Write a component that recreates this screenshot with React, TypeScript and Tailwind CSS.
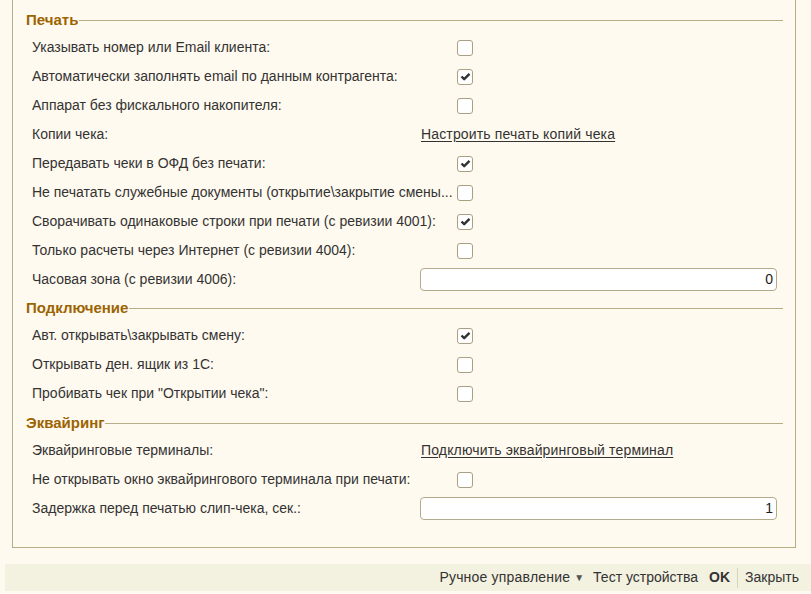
import React from 'react'

type Row =
    | { kind: 'check'; label: string; checked: boolean }
    | { kind: 'link'; label: string; link: string }
    | { kind: 'input'; label: string; value: string }

const sections: { title: string; rows: Row[] }[] = [
    {
        title: 'Печать',
        rows: [
            { kind: 'check', label: 'Указывать номер или Email клиента:', checked: false },
            { kind: 'check', label: 'Автоматически заполнять email по данным контрагента:', checked: true },
            { kind: 'check', label: 'Аппарат без фискального накопителя:', checked: false },
            { kind: 'link', label: 'Копии чека:', link: 'Настроить печать копий чека' },
            { kind: 'check', label: 'Передавать чеки в ОФД без печати:', checked: true },
            { kind: 'check', label: 'Не печатать служебные документы (открытие\\закрытие смены...', checked: false },
            { kind: 'check', label: 'Сворачивать одинаковые строки при печати (с ревизии 4001):', checked: true },
            { kind: 'check', label: 'Только расчеты через Интернет (с ревизии 4004):', checked: false },
            { kind: 'input', label: 'Часовая зона (с ревизии 4006):', value: '0' },
        ],
    },
    {
        title: 'Подключение',
        rows: [
            { kind: 'check', label: 'Авт. открывать\\закрывать смену:', checked: true },
            { kind: 'check', label: 'Открывать ден. ящик из 1С:', checked: false },
            { kind: 'check', label: 'Пробивать чек при "Открытии чека":', checked: false },
        ],
    },
    {
        title: 'Эквайринг',
        rows: [
            { kind: 'link', label: 'Эквайринговые терминалы:', link: 'Подключить эквайринговый терминал' },
            { kind: 'check', label: 'Не открывать окно эквайрингового терминала при печати:', checked: false },
            { kind: 'input', label: 'Задержка перед печатью слип-чека, сек.:', value: '1' },
        ],
    },
]

const Checkbox = ({ checked }: { checked: boolean }) => (
    <div className="w-[16px] h-[16px] rounded-[3px] border border-[#a9a083] bg-white flex items-center justify-center">
        {checked ?
            <svg width="11" height="9" viewBox="0 0 11 9">
                <path d="M1.5 4.5 L4.2 7.2 L9.5 1.8" stroke="#333" strokeWidth="2.4" fill="none" strokeLinejoin="round" />
            </svg>
            : null}
    </div>
)

const FieldRow = ({ row }: { row: Row }) => {
    if (row.kind === 'check') {
        return (
            <div className="h-[29px] flex items-center pl-[6px]">
                <div className="w-[420px] whitespace-nowrap overflow-hidden">{row.label}</div>
                <div className="ml-[5px]"><Checkbox checked={row.checked} /></div>
            </div>
        )
    }
    if (row.kind === 'link') {
        return (
            <div className="h-[29px] flex items-center pl-[6px]">
                <div className="w-[389px] truncate">{row.label}</div>
                <span className="underline underline-offset-2 tracking-[0.15px]">{row.link}</span>
            </div>
        )
    }
    return (
        <div className="h-[29px] flex items-center pl-[6px]">
            <div className="w-[388px] truncate">{row.label}</div>
            <div className="w-[357px] h-[23px] rounded-[4px] border border-[#b3aa8c] bg-white flex items-center justify-end pr-[3px] text-[#1a1a1a]">
                {row.value}
            </div>
        </div>
    )
}

export default function App() {
    return (
        <div className="w-[811px] h-[594px] bg-[#fffaef] text-[#333] text-[14px] overflow-hidden" style={{ fontFamily: 'Arial, "Liberation Sans", sans-serif' }}>
            <div className="ml-[12px] w-[784px] border-x border-b border-[#b7ad86] pl-[13px] pr-[12px] pt-[7px] pb-[24px]">
                {sections.map((s, i) => (
                    <div key={s.title}>
                        <div className={`h-[26px] flex items-center gap-[1px] ${i === 0 ? '' : i === 1 ? 'mt-[1px]' : 'mt-[2px]'}`}>
                            <span className="font-bold text-[15px] text-[#9c6402]">{s.title}</span>
                            <div className="flex-1 h-px bg-[#b7ad86] mt-[1px]" />
                        </div>
                        {s.rows.map((r) => <FieldRow key={r.label} row={r} />)}
                    </div>
                ))}
            </div>
            <div className="ml-[5px] mt-[16px] h-[27px] bg-[#f3f1e0] flex items-center justify-end pr-[12px] text-[#333] text-[14px]">
                <span className="tracking-[0.2px]">Ручное управление</span>
                <span className="ml-[4px] text-[10px] text-[#555]">▼</span>
                <span className="ml-[9px]">Тест устройства</span>
                <span className="ml-[11px] font-bold">OK</span>
                <div className="mx-[7px] w-px h-[20px] bg-[#d8d3bd]" />
                <span>Закрыть</span>
            </div>
        </div>
    )
}
